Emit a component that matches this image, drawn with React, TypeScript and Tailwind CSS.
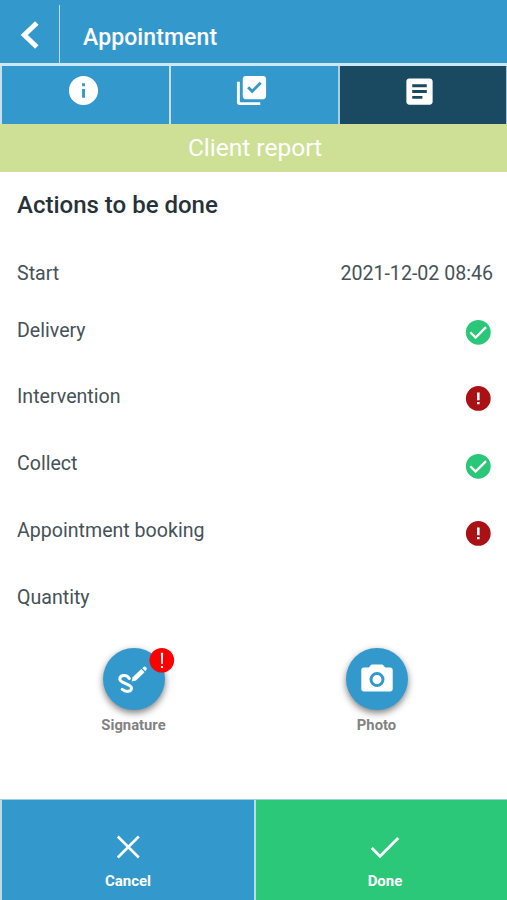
import type { ReactNode } from 'react';
import { MdArticle, MdInfo, MdLibraryAddCheck } from 'react-icons/md';

function DoneMark() {
  return (
    <svg viewBox="0 0 26 26" className="mr-[2px] h-[26px] w-[26px]" fill="none">
      <circle cx="13.3" cy="13.3" r="12.4" fill="#29c777" />
      <path d="M5.3 13.3l5.3 5.3L21 8.1" stroke="#fff" strokeWidth="2.3" />
    </svg>
  );
}

function AlertMark() {
  return (
    <svg viewBox="0 0 26 26" className="mr-[2px] h-[26px] w-[26px]">
      <circle cx="13.3" cy="13.4" r="12.4" fill="#aa1114" />
      <path d="M12 7.4h2.6v7.8h-2.6zM12 17h2.6v2.3h-2.6z" fill="#fff" />
    </svg>
  );
}

function Row({ label, height, children }: { label: ReactNode; height: string; children?: ReactNode }) {
  return (
    <div className={`flex items-center justify-between pr-[14px] pl-[17px] ${height}`}>
      {label}
      {children}
    </div>
  );
}

const text = 'whitespace-nowrap text-[19.6px] leading-6 text-[#465257]';

export default function App() {
  return (
    <div className="flex h-[900px] w-[507px] flex-col overflow-hidden bg-white font-['Roboto',sans-serif]">
      <header className="flex h-[63px] shrink-0 items-end bg-[#3399cd]">
        <button className="flex h-[58px] w-[60px] items-center border-r-[1.5px] border-[#b5dcf0] pl-[19px]" aria-label="Back">
          <svg viewBox="0 0 22 32" className="h-8 w-[22px]" fill="none">
            <path d="M17.8 5L5.3 17l12.5 12" stroke="#fff" strokeWidth="5" />
          </svg>
        </button>
        <h1 className="ml-[23px] h-[39px] text-[23px] leading-7 font-medium tracking-[0.1px] whitespace-nowrap text-white">Appointment</h1>
      </header>

      <nav className="flex h-[61px] shrink-0 border-t-[3px] border-[#cde7f5] bg-[#3399cd] text-[35px] text-white">
        <div className="flex w-[171px] justify-center border-r-2 border-l-2 border-[#c5e1ef] pt-[7px]">
          <MdInfo className="-ml-[5px]" />
        </div>
        <div className="flex w-[169px] justify-center border-r-2 border-[#a9cfe2] pt-[7px]">
          <MdLibraryAddCheck className="-ml-[6px]" />
        </div>
        <div className="flex flex-1 justify-center border-r border-[#a9c4d0] bg-[#1a4a62] pt-2">
          <MdArticle className="-ml-[7px]" />
        </div>
      </nav>

      <div className="flex h-12 shrink-0 items-center justify-center bg-[#cde096] pl-[3px]">
        <h2 className="text-[24.5px] leading-7 whitespace-nowrap text-white">Client report</h2>
      </div>

      <main className="flex flex-1 flex-col">
        <h3 className="mt-[18px] ml-[17px] h-[30px] text-[24px] leading-[30px] font-medium whitespace-nowrap text-[#263238]">
          Actions to be done
        </h3>
        <div className="mt-[20px] flex flex-col">
          <Row label={<span className={`${text} pt-[4px]`}>Start</span>} height="h-[64px]">
            <span className={`${text} pt-[4px]`}>2021-12-02 08:46</span>
          </Row>
          <Row label={<span className={`${text} pb-[3px]`}>Delivery</span>} height="h-[56px]">
            <DoneMark />
          </Row>
          <Row label={<span className={`${text} pb-[3px]`}>Intervention</span>} height="h-[76px]">
            <AlertMark />
          </Row>
          <Row label={<span className={`${text} pb-[3px]`}>Collect</span>} height="h-[59px]">
            <DoneMark />
          </Row>
          <Row label={<span className={`${text} pb-[3px]`}>Appointment booking</span>} height="h-[75px]">
            <AlertMark />
          </Row>
          <Row label={<span className={`${text} pt-[2px]`}>Quantity</span>} height="h-[53px]" />
        </div>

        <div className="mt-[25px] flex justify-between pr-[90px] pl-[93px]">
          <div className="flex w-[81px] flex-col items-center">
            <div className="relative flex h-[62px] w-[62px] items-center justify-center rounded-full bg-[#3399cd] shadow-[0_3px_7px_rgba(0,0,0,0.5)]">
              <svg viewBox="0 0 34 32" className="h-8 w-[34px]" fill="none">
                <path
                  d="M12.300 15.500C9.500 10.500 2.600 12.300 2.800 16.100c.3 4.700 12.200 4.300 11.700 9.200-.4 3.800-5.700 4-9.300 1.100"
                  stroke="#fff"
                  strokeWidth="3"
                  strokeLinecap="round"
                />
                <path d="M14.700 18.500l.9-4.200 8.700-8.200 3.200 3.200-8.500 8.100z" fill="#fff" />
                <path d="M25.300 5.200l1.500-1.400q.8-.7 1.500 0l1.300 1.300q.7.800 0 1.500L28.300 8.200z" fill="#fff" />
              </svg>
              <svg viewBox="0 0 26 26" className="absolute -top-px left-[46px] h-[26px] w-[26px]">
                <circle cx="12.8" cy="13.3" r="12.3" fill="#fe0000" />
                <path d="M11.9 5.7h2.2l-.3 11.2h-1.6zM11.9 18.9h2.2v2.2h-2.2z" fill="#fff" />
              </svg>
            </div>
            <span className="mt-[5px] text-[14.8px] leading-5 font-bold text-[#828282]">Signature</span>
          </div>
          <div className="flex w-[81px] flex-col items-center">
            <div className="flex h-[62px] w-[62px] items-center justify-center rounded-full bg-[#3399cd] shadow-[0_3px_7px_rgba(0,0,0,0.5)]">
              <svg viewBox="0 0 32 28" className="mb-[3px] h-7 w-8">
                <path d="M10.5 .5h11l2.8 3.1H29q2.7 0 2.7 2.7v18.5q0 2.7-2.7 2.7H3q-2.7 0-2.7-2.7V6.3q0-2.7 2.7-2.7h4.7z" fill="#fff" />
                <circle cx="16" cy="15.5" r="6" fill="#fff" stroke="#3399cd" strokeWidth="3" />
              </svg>
            </div>
            <span className="mt-[5px] text-[14.8px] leading-5 font-bold text-[#828282]">Photo</span>
          </div>
        </div>
      </main>

      <footer className="flex h-[101px] shrink-0 border-t border-[#9bcfe2] text-[15px] leading-5 font-bold text-white">
        <button className="flex w-[256px] flex-col items-center border-r-2 border-l-2 border-[#b7dce5] bg-[#3399cd] pt-[35px]">
          <svg viewBox="0 0 24 24" className="h-6 w-6" fill="none">
            <path d="M1.8 1.5l21 21M22.8 1.5l-21 21" stroke="#fff" strokeWidth="2.6" />
          </svg>
          <span className="mt-[12px]">Cancel</span>
        </button>
        <button className="flex flex-1 flex-col items-center bg-[#2bc879] pt-[35px]">
          <svg viewBox="0 0 30 24" className="mr-[-7px] h-6 w-[30px]" fill="none">
            <path d="M1.8 13l8.2 8.2L28.2 3" stroke="#fff" strokeWidth="2.8" />
          </svg>
          <span className="mt-[12px] mr-[-7px]">Done</span>
        </button>
      </footer>
    </div>
  );
}
